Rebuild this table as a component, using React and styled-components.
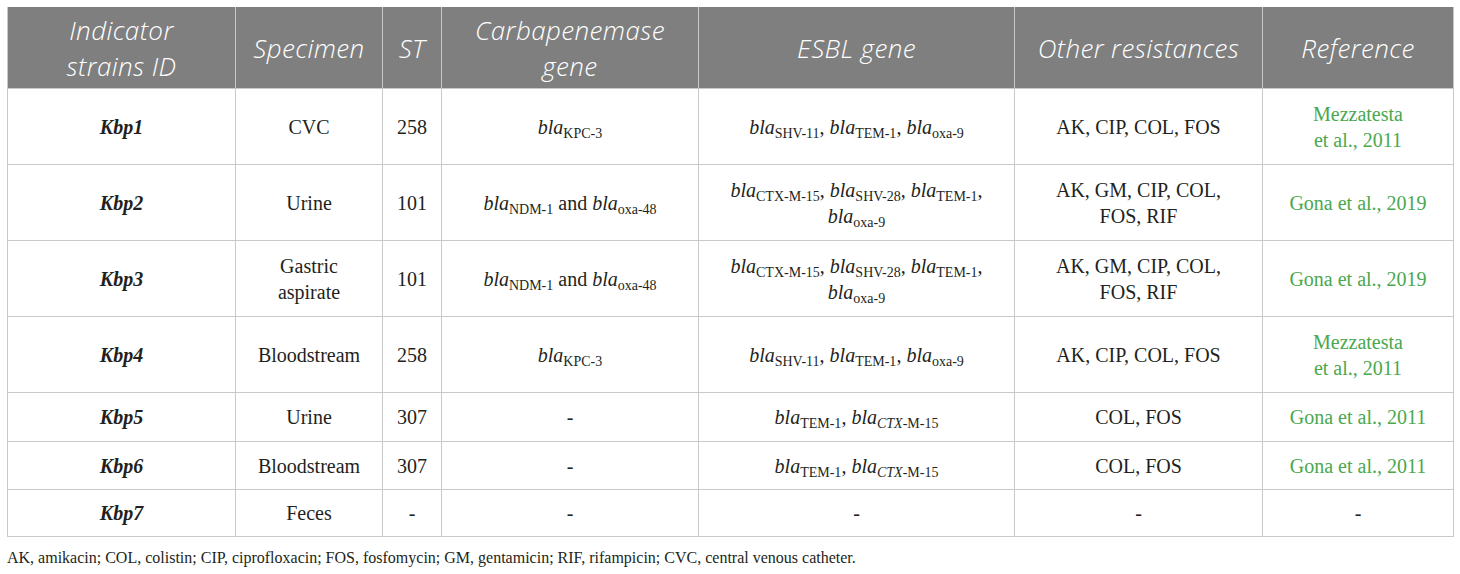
import React from "react";
import styled, { createGlobalStyle } from "styled-components";

const GlobalStyle = createGlobalStyle`
  body {
    margin: 0;
    background: #ffffff;
  }
`;

const Page = styled.div`
  padding: 7px 7px 0 7px;
`;

const Table = styled.table`
  border-collapse: collapse;
  table-layout: fixed;
  width: 1446px;
  font-family: "Liberation Serif", "Times New Roman", serif;
  color: #231f20;
`;

const HeadCell = styled.th`
  background-color: #7f7f7f;
  color: #ffffff;
  font-family: "Open Sans", "Noto Sans", sans-serif;
  font-style: italic;
  font-weight: 300;
  font-size: 26px;
  letter-spacing: 0.4px;
  line-height: 36px;
  height: 81px;
  padding: 0 4px;
  text-align: center;
  vertical-align: middle;
  border: 1px solid #c9c9c9;
  border-top: none;
  white-space: nowrap;
`;

const HeadLine = styled.span`
  display: block;
`;

const Cell = styled.td`
  height: ${(props) => props.h}px;
  padding: 0 4px;
  text-align: center;
  vertical-align: middle;
  border: 1px solid #c9c9c9;
  font-size: 20px;
  line-height: 26px;
  white-space: nowrap;
  color: ${(props) => (props.link ? "#4aa84e" : "#231f20")};
  font-weight: ${(props) => (props.strong ? 700 : 400)};
  font-style: ${(props) => (props.strong ? "italic" : "normal")};
`;

const Gene = styled.i`
  font-style: italic;
`;

const Sub = styled.sub`
  font-size: 14px;
  font-style: normal;
  vertical-align: -4px;
  line-height: 0;
`;

const Note = styled.p`
  margin: 12px 0 0 0;
  font-family: "Liberation Serif", "Times New Roman", serif;
  font-size: 16px;
  color: #231f20;
`;

const Bla = ({ sub, italicPart }) => (
  <>
    <Gene>bla</Gene>
    <Sub>
      {italicPart ? <i>{italicPart}</i> : null}
      {sub}
    </Sub>
  </>
);

const widths = [228, 147, 59, 257, 316, 248, 191];

const headers = [
  ["Indicator", "strains ID"],
  ["Specimen"],
  ["ST"],
  ["Carbapenemase", "gene"],
  ["ESBL gene"],
  ["Other resistances"],
  ["Reference"],
];

const kpc = <Bla sub="KPC-3" />;
const ndm = (
  <>
    <Bla sub="NDM-1" /> and <Bla sub="oxa-48" />
  </>
);
const shv11 = (
  <>
    <Bla sub="SHV-11" />, <Bla sub="TEM-1" />, <Bla sub="oxa-9" />
  </>
);
const ctx = (
  <>
    <Bla sub="CTX-M-15" />, <Bla sub="SHV-28" />, <Bla sub="TEM-1" />,
    <br />
    <Bla sub="oxa-9" />
  </>
);
const tem = (
  <>
    <Bla sub="TEM-1" />, <Bla italicPart="CTX" sub="-M-15" />
  </>
);

const rows = [
  {
    id: "Kbp1", spec: "CVC", st: "258", carb: kpc, esbl: shv11,
    other: "AK, CIP, COL, FOS", ref: <>Mezzatesta<br />et al., 2011</>, h: 75,
  },
  {
    id: "Kbp2", spec: "Urine", st: "101", carb: ndm, esbl: ctx,
    other: <>AK, GM, CIP, COL,<br />FOS, RIF</>, ref: "Gona et al., 2019", h: 75,
  },
  {
    id: "Kbp3", spec: <>Gastric<br />aspirate</>, st: "101", carb: ndm, esbl: ctx,
    other: <>AK, GM, CIP, COL,<br />FOS, RIF</>, ref: "Gona et al., 2019", h: 75,
  },
  {
    id: "Kbp4", spec: "Bloodstream", st: "258", carb: kpc, esbl: shv11,
    other: "AK, CIP, COL, FOS", ref: <>Mezzatesta<br />et al., 2011</>, h: 75,
  },
  {
    id: "Kbp5", spec: "Urine", st: "307", carb: "-", esbl: tem,
    other: "COL, FOS", ref: "Gona et al., 2011", h: 48,
  },
  {
    id: "Kbp6", spec: "Bloodstream", st: "307", carb: "-", esbl: tem,
    other: "COL, FOS", ref: "Gona et al., 2011", h: 47,
  },
  {
    id: "Kbp7", spec: "Feces", st: "-", carb: "-", esbl: "-",
    other: "-", ref: "-", h: 46, noLink: true,
  },
];

const App = () => {
  return (
    <Page>
      <GlobalStyle />
      <Table>
        <colgroup>
          {widths.map((w, i) => (
            <col key={i} style={{ width: w }} />
          ))}
        </colgroup>
        <thead>
          <tr>
            {headers.map((lines, i) => (
              <HeadCell key={i}>
                {lines.map((l) => (
                  <HeadLine key={l}>{l}</HeadLine>
                ))}
              </HeadCell>
            ))}
          </tr>
        </thead>
        <tbody>
          {rows.map((r) => (
            <tr key={r.id}>
              <Cell h={r.h} strong>{r.id}</Cell>
              <Cell h={r.h}>{r.spec}</Cell>
              <Cell h={r.h}>{r.st}</Cell>
              <Cell h={r.h}>{r.carb}</Cell>
              <Cell h={r.h}>{r.esbl}</Cell>
              <Cell h={r.h}>{r.other}</Cell>
              <Cell h={r.h} link={!r.noLink}>{r.ref}</Cell>
            </tr>
          ))}
        </tbody>
      </Table>
      <Note>
        AK, amikacin; COL, colistin; CIP, ciprofloxacin; FOS, fosfomycin; GM,
        gentamicin; RIF, rifampicin; CVC, central venous catheter.
      </Note>
    </Page>
  );
};

export default App;
